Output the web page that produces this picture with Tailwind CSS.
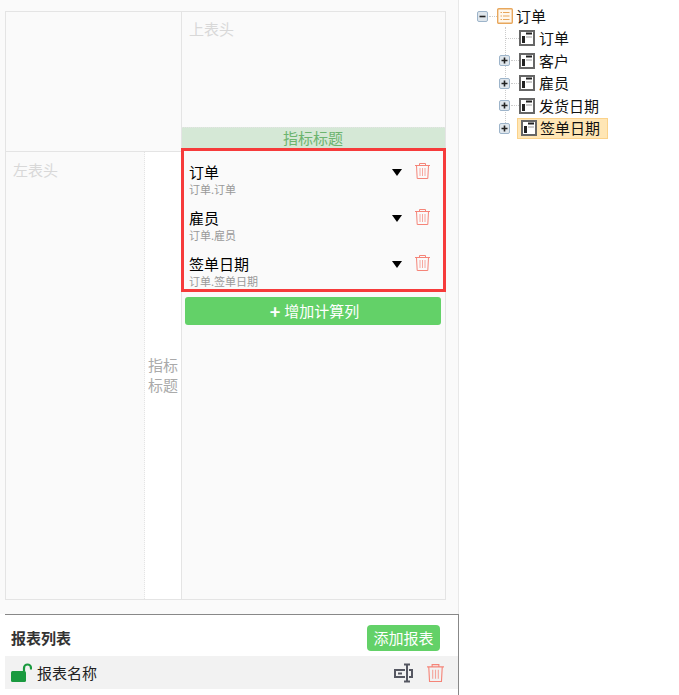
<!DOCTYPE html>
<html lang="zh-CN">
<head>
    <meta charset="UTF-8">
    <title>报表设计</title>
    <script src="https://cdn.jsdelivr.net/npm/@tailwindcss/browser@4"></script>
</head>
<body class="bg-white font-['Noto_Sans_CJK_SC','Liberation_Sans',sans-serif] text-[15px] leading-[20px] text-[#111]">
<svg class="hidden">
    <symbol id="trash" viewBox="0 0 15 16" fill="none" stroke="currentColor">
        <path d="M0 2.500h15M4.500 2.500V0.500h6v2M1.500 2.500l0.700 13h10.600l0.700-13"/>
        <path d="M5 5v8M7.500 5v8M10 5v8" stroke-opacity="0.7"/>
    </symbol>
    <symbol id="table" viewBox="0 0 16 16" fill="none">
        <rect x="1" y="1" width="14" height="14" fill="#fff" stroke="#666" stroke-width="2"/>
        <path d="M3 6h3v7H3z" fill="#222"/>
        <path d="M7 3.500h6" stroke="#222" stroke-width="2"/>
        <path d="M7 7h6" stroke="#999"/>
    </symbol>
    <symbol id="plus-box" viewBox="0 0 11 11">
        <rect x="0.500" y="0.500" width="10" height="10" rx="1.500" fill="#dfe6ec" stroke="#9db4ca"/>
        <path d="M2.500 5.500h6M5.500 2.500v6" stroke="#222" stroke-width="1.600"/>
    </symbol>
</svg>

<div class="flex h-[695px] w-[679px] overflow-hidden">
    <!-- Designer -->
    <div class="w-[459px] shrink-0 flex flex-col">
        <div class="h-[614px] bg-[#fafafa] pl-[5px] pr-[12px] pt-[11px] border-r border-[#e8e8e8]">
            <div class="flex h-[589px] border border-[#e4e4e4]">
                <!-- Left column -->
                <div class="w-[176px] shrink-0 flex flex-col border-r border-[#e4e4e4]">
                    <div class="h-[140px] border-b border-[#e4e4e4]"></div>
                    <div class="flex flex-1">
                        <div class="w-[139px] border-r border-dotted border-[#e4e4e4] pl-[7px] pt-[8px] text-[#d8d8d8]">左表头</div>
                        <div class="flex-1 bg-white flex items-center justify-center text-center leading-[20px] text-[#aaa] pb-[2px]">指标<br>标题</div>
                    </div>
                </div>
                <!-- Right column -->
                <div class="flex-1 flex flex-col">
                    <div class="h-[115px] pl-[7px] pt-[7px] text-[#d8d8d8]">上表头</div>
                    <div class="h-[21px] bg-[#d5e8d6] border-t border-dotted border-[#e4e4e4] text-center text-[#6cb46f] leading-[20px] overflow-visible pr-[1px]">指标标题</div>
                    <div class="-mx-px h-[144px] border-[3px] border-[#f63b3b] pl-[5px] pr-[13px] pt-[11px] z-10">
                        <div class="h-[46px] flex justify-between">
                            <div>
                                <div class="text-black h-[20px]">订单</div>
                                <div class="text-[11px] leading-[14px] text-[#999]">订单.订单</div>
                            </div>
                            <div class="flex items-start">
                                <svg class="w-[10px] h-[7px] mt-[7px] mr-[13px]" viewBox="0 0 10 7"><path d="M0 0h10L5 7z" fill="#000"/></svg>
                                <svg class="w-[15px] h-[16px] mt-[1px] text-[#f58478]"><use href="#trash"/></svg>
                            </div>
                        </div>
                        <div class="h-[46px] flex justify-between">
                            <div>
                                <div class="text-black h-[20px]">雇员</div>
                                <div class="text-[11px] leading-[14px] text-[#999]">订单.雇员</div>
                            </div>
                            <div class="flex items-start">
                                <svg class="w-[10px] h-[7px] mt-[7px] mr-[13px]" viewBox="0 0 10 7"><path d="M0 0h10L5 7z" fill="#000"/></svg>
                                <svg class="w-[15px] h-[16px] mt-[1px] text-[#f58478]"><use href="#trash"/></svg>
                            </div>
                        </div>
                        <div class="h-[46px] flex justify-between">
                            <div>
                                <div class="text-black h-[20px]">签单日期</div>
                                <div class="text-[11px] leading-[14px] text-[#999]">订单.签单日期</div>
                            </div>
                            <div class="flex items-start">
                                <svg class="w-[10px] h-[7px] mt-[7px] mr-[13px]" viewBox="0 0 10 7"><path d="M0 0h10L5 7z" fill="#000"/></svg>
                                <svg class="w-[15px] h-[16px] mt-[1px] text-[#f58478]"><use href="#trash"/></svg>
                            </div>
                        </div>
                    </div>
                    <div class="ml-[3px] mr-[4px] mt-[5px] h-[28px] rounded-[3px] bg-[#63d168] text-white flex items-center justify-center pl-[3px] pb-[1px]">
                        <span class="font-bold text-[18px] mr-[4px] leading-none">+</span>增加计算列
                    </div>
                </div>
            </div>
        </div>
        <!-- Report list -->
        <div class="ml-[5px] flex-1 border-t border-r border-[#888]">
            <div class="h-[41px] flex items-center justify-between pl-[6px] pr-[18px] pt-[5px]">
                <span class="font-bold text-[#333]">报表列表</span>
                <span class="h-[26px] w-[73px] rounded-[4px] bg-[#63d168] text-white flex items-center justify-center">添加报表</span>
            </div>
            <div class="h-[33px] bg-[#f2f2f2] flex items-center pl-[6px] pr-[14px] text-[#222]">
                <svg class="w-[21px] h-[19px] mr-[5px]" viewBox="0 0 21 19"><path d="M13 8V5a3.500 3.500 0 0 1 7 0v1.500" fill="none" stroke="#1a9a3f" stroke-width="2.200"/><rect x="0" y="8" width="15" height="11" rx="1.500" fill="#1a9a3f"/></svg>
                <span class="flex-1">报表名称</span>
                <svg class="w-[19px] h-[20px] mr-[14px]" viewBox="0 0 19 20" fill="none" stroke="#555761" stroke-width="2"><path d="M11 7H1v7h10M15 7h3v7h-3"/><path d="M13 1.500v17M10 1.500h6M10 18.500h6"/><path d="M4 10.500h4"/></svg>
                <svg class="w-[17px] h-[18px] text-[#f58478]"><use href="#trash"/></svg>
            </div>
        </div>
    </div>

    <!-- Field tree -->
    <div class="flex-1 pl-[18px] pt-[5px] relative">
        <!-- dotted guide joining the branches -->
        <span class="absolute left-[46px] top-[27px] h-[98px] border-l border-dotted border-[#ccc]"></span>
        <div class="h-[22px] flex items-center">
            <svg class="w-[11px] h-[11px]" viewBox="0 0 11 11"><rect x="0.500" y="0.500" width="10" height="10" rx="1.500" fill="#dfe6ec" stroke="#9db4ca"/><path d="M2.500 5.500h6" stroke="#222" stroke-width="1.600"/></svg>
            <span class="w-[8px] border-t border-dotted border-[#ccc] ml-[1px]"></span>
            <svg class="w-[16px] h-[16px] mr-[3px]" viewBox="0 0 16 16" fill="none"><rect x="0.700" y="0.700" width="14.600" height="14.600" rx="1" fill="#fff8ee" stroke="#e8a75c" stroke-width="1.400"/><path d="M3.500 4.500h1.500M6 4.500h6.500M3.500 8h1.500M6 8h6.500M3.500 11.500h1.500M6 11.500h6.500" stroke="#e8a75c"/></svg>
            <span>订单</span>
        </div>
        <div class="h-[22.500px] flex items-center pl-[28px]">
            <span class="w-[14px] border-t border-dotted border-[#ccc]"></span>
            <svg class="w-[16px] h-[16px] mr-[4px]"><use href="#table"/></svg>
            <span>订单</span>
        </div>
        <div class="h-[22.500px] flex items-center pl-[22px]">
            <svg class="w-[11px] h-[11px] relative z-10"><use href="#plus-box"/></svg>
            <span class="w-[8px] border-t border-dotted border-[#ccc] ml-[1px]"></span>
            <svg class="w-[16px] h-[16px] mr-[4px]"><use href="#table"/></svg>
            <span>客户</span>
        </div>
        <div class="h-[22.500px] flex items-center pl-[22px]">
            <svg class="w-[11px] h-[11px] relative z-10"><use href="#plus-box"/></svg>
            <span class="w-[8px] border-t border-dotted border-[#ccc] ml-[1px]"></span>
            <svg class="w-[16px] h-[16px] mr-[4px]"><use href="#table"/></svg>
            <span>雇员</span>
        </div>
        <div class="h-[22.500px] flex items-center pl-[22px]">
            <svg class="w-[11px] h-[11px] relative z-10"><use href="#plus-box"/></svg>
            <span class="w-[8px] border-t border-dotted border-[#ccc] ml-[1px]"></span>
            <svg class="w-[16px] h-[16px] mr-[4px]"><use href="#table"/></svg>
            <span>发货日期</span>
        </div>
        <div class="h-[22.500px] flex items-center pl-[22px]">
            <svg class="w-[11px] h-[11px] relative z-10"><use href="#plus-box"/></svg>
            <span class="w-[6px] ml-[1px]"></span>
            <div class="h-[21px] w-[91px] bg-[#ffe6b5] border border-[#fbd28a] flex items-center pl-[3px]">
                <svg class="w-[16px] h-[16px] mr-[3px]"><use href="#table"/></svg>
                <span>签单日期</span>
            </div>
        </div>
    </div>
</div>
</body>
</html>
